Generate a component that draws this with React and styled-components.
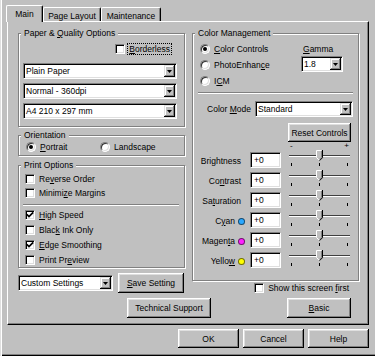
import React from "react";
import styled, { createGlobalStyle } from "styled-components";

const GlobalStyle = createGlobalStyle`
  * { box-sizing: border-box; }
  html, body { margin: 0; padding: 0; background: #c0c0c0; }
  body {
    font-family: "Liberation Sans", Arial, sans-serif;
    font-size: 8.5px;
    line-height: 10px;
    color: #000;
  }
`;

const Dialog = styled.div`
  width: 375px;
  height: 356px;
  padding: 5px 6px 0 6px;
  background: #c0c0c0;
  box-shadow: inset 1px 0 #dfdfdf, inset 2px 0 #fff, inset 0 -1px #000,
    inset 0 -2px #808080;
  display: flex;
  flex-direction: column;
  overflow: hidden;
`;

const TabStrip = styled.div`
  display: flex;
  align-items: flex-end;
  height: 17px;
  margin-bottom: -1px;
  position: relative;
  z-index: 1;
`;

const Tab = styled.div`
  width: ${(p) => p.$w}px;
  height: ${(p) => (p.$active ? 17 : 14)}px;
  margin-bottom: ${(p) => (p.$active ? 0 : 1)}px;
  background: #c0c0c0;
  border-top: 1px solid #fff;
  border-left: 1px solid #fff;
  border-right: 1px solid #000;
  box-shadow: inset -1px 0 #808080;
  border-radius: 2px 2px 0 0;
  display: flex;
  justify-content: center;
  padding-top: 3px;
  white-space: nowrap;
`;

const Panel = styled.div`
  position: relative;
  margin-left: 1px;
  width: 362px;
  height: 304px;
  border-top: 1px solid #fff;
  border-left: 1px solid #fff;
  border-right: 1px solid #000;
  border-bottom: 1px solid #000;
  box-shadow: inset -1px -1px #808080;
  padding: 11px 9px 0 10px;
  display: flex;
  flex-direction: column;
`;

const Columns = styled.div`
  display: grid;
  grid-template-columns: 167px 167px;
  column-gap: 7px;
  align-items: start;
`;

const Col = styled.div`
  display: flex;
  flex-direction: column;
`;

const Group = styled.div`
  position: relative;
  border: 1px solid #808080;
  box-shadow: inset 1px 1px #fff, 1px 1px #fff;
  padding: ${(p) => p.$pad};
  margin-top: ${(p) => p.$mt || 0}px;
`;

const Legend = styled.div`
  position: absolute;
  top: -6px;
  left: 2px;
  padding: 0 3px;
  line-height: 10px;
  background: #c0c0c0;
  white-space: nowrap;
`;

const Mn = styled.span`
  text-decoration: underline;
  text-underline-offset: 1px;
`;

const Text = styled.span`
  white-space: nowrap;
`;

const Option = styled.div`
  display: flex;
  align-items: center;
  gap: 4px;
  height: 10px;
  white-space: nowrap;
`;

const EndRow = styled.div`
  display: flex;
  justify-content: flex-end;
  padding-right: ${(p) => p.$pr || 0}px;
  margin-top: ${(p) => p.$mt || 0}px;
`;

const Focus = styled.span`
  outline: 1px dotted #000;
  outline-offset: 0;
  padding: 0 1px;
  margin-left: -1px;
`;

const CheckBox = styled.span`
  flex: none;
  width: 10px;
  height: 10px;
  background: #fff;
  border: 1px solid;
  border-color: #808080 #fff #fff #808080;
  box-shadow: inset 1px 1px #000, inset -1px -1px #dfdfdf;
  display: flex;
  align-items: center;
  justify-content: center;
`;

const RadioCircle = styled.span`
  flex: none;
  width: 10px;
  height: 10px;
  border-radius: 50%;
  background: #fff;
  border: 1px solid;
  border-color: #808080 #fff #fff #808080;
  box-shadow: inset 1px 1px #303030, inset -1px -1px #dfdfdf;
  display: flex;
  align-items: center;
  justify-content: center;
`;

const RadioDot = styled.span`
  width: 4px;
  height: 4px;
  border-radius: 50%;
  background: #000;
`;

const Stack = styled.div`
  display: flex;
  flex-direction: column;
  gap: ${(p) => p.$gap}px;
  margin-top: ${(p) => p.$mt || 0}px;
`;

const Field = styled.div`
  width: ${(p) => (p.$w ? `${p.$w}px` : "100%")};
  flex: none;
  height: 16px;
  background: #fff;
  border: 1px solid;
  border-color: #808080 #fff #fff #808080;
  box-shadow: inset 1px 1px #000, inset -1px -1px #dfdfdf;
  padding: 1px;
  display: flex;
  align-items: stretch;
`;

const FieldText = styled.span`
  flex: 1;
  padding-left: 1px;
  line-height: 12px;
  white-space: nowrap;
  overflow: hidden;
`;

const DropBtn = styled.span`
  flex: none;
  width: 11px;
  background: #c0c0c0;
  box-shadow: inset -1px -1px #000, inset 1px 1px #dfdfdf,
    inset -2px -2px #808080, inset 2px 2px #fff;
  display: flex;
  align-items: center;
  justify-content: center;
`;

const Separator = styled.div`
  height: 2px;
  border-top: 1px solid #808080;
  border-bottom: 1px solid #fff;
  margin: ${(p) => p.$m};
`;

const RadioPair = styled.div`
  display: grid;
  grid-template-columns: 74px auto;
`;

const Btn = styled.div`
  flex: none;
  width: ${(p) => p.$w}px;
  height: ${(p) => p.$h || 20}px;
  background: #c0c0c0;
  box-shadow: inset -1px -1px #000, inset 1px 1px #fff, inset -2px -2px #808080,
    inset 2px 2px #dfdfdf;
  display: flex;
  align-items: center;
  justify-content: center;
  white-space: nowrap;
  margin: ${(p) => p.$m || 0};
`;

const Row = styled.div`
  display: flex;
  align-items: center;
  gap: ${(p) => p.$gap || 0}px;
  height: ${(p) => p.$h}px;
  margin-top: ${(p) => p.$mt || 0}px;
  justify-content: ${(p) => p.$justify || "flex-start"};
`;

const TopSection = styled.div`
  display: flex;
  justify-content: space-between;
  align-items: flex-start;
`;

const GammaBlock = styled.div`
  width: 42px;
  margin-right: 10px;
  display: flex;
  flex-direction: column;
  gap: 2px;
`;

const GammaLabel = styled.div`
  height: 10px;
  padding-left: 2px;
`;

const ScaleRow = styled.div`
  display: flex;
  justify-content: space-between;
  height: 8px;
  margin: 0 3px 0 89px;
  padding: 0 1px;
  font-size: 8px;
  line-height: 7px;
`;

const SliderRow = styled.div`
  display: flex;
  align-items: flex-start;
  height: 20px;
`;

const LabelCell = styled.div`
  width: 45px;
  height: 20px;
  padding-top: 2px;
  padding-right: ${(p) => (p.$dot ? 0 : 4)}px;
  display: flex;
  justify-content: flex-end;
  align-items: center;
  gap: 3px;
  white-space: nowrap;
`;

const Dot = styled.span`
  width: 7px;
  height: 7px;
  border-radius: 50%;
  background: ${(p) => p.$c};
  border: 1px solid rgba(0, 0, 0, 0.55);
`;

const ValueBox = styled(Field)`
  margin: 2px 0 0 5px;
  padding-left: 2px;
`;

const SliderWrap = styled.div`
  margin-left: 8px;
  width: 61px;
  height: 18px;
`;

const BottomRow = styled.div`
  display: flex;
  justify-content: flex-end;
  gap: 76px;
  margin-top: 5px;
  padding-right: 8px;
`;

const Footer = styled.div`
  display: flex;
  justify-content: flex-end;
  gap: 4px;
  margin-top: 4px;
`;

const lbl = (t, i) =>
  i == null ? (
    <Text>{t}</Text>
  ) : (
    <Text>
      {t.slice(0, i)}
      <Mn>{t[i]}</Mn>
      {t.slice(i + 1)}
    </Text>
  );

const Check = ({ checked }) => (
  <CheckBox>
    {checked && (
      <svg width="8" height="8" viewBox="0 0 8 8">
        <path d="M0.8 3.4 L3 5.6 L7.2 1.4" fill="none" stroke="#000" strokeWidth="1.7" />
      </svg>
    )}
  </CheckBox>
);

const Radio = ({ checked }) => (
  <RadioCircle>{checked && <RadioDot />}</RadioCircle>
);

const Select = ({ w, children }) => (
  <Field $w={w}>
    <FieldText>{children}</FieldText>
    <DropBtn>
      <svg width="5" height="3" viewBox="0 0 5 3">
        <polygon points="0,0 5,0 2.5,3" fill="#000" />
      </svg>
    </DropBtn>
  </Field>
);

const Slider = () => (
  <SliderWrap>
    <svg width="61" height="18" viewBox="0 0 61 18">
      <rect x="0" y="5" width="61" height="1" fill="#404040" />
      <rect x="0" y="6" width="61" height="1" fill="#fff" />
      <rect x="2" y="13" width="1" height="3" fill="#000" />
      <rect x="30" y="13" width="1" height="3" fill="#000" />
      <rect x="58" y="13" width="1" height="3" fill="#000" />
      <polygon points="27,0 33,0 33,7.5 30,10.5 27,7.5" fill="#c0c0c0" />
      <path d="M27.5 7.5 V0.5 H32.5" fill="none" stroke="#fff" strokeWidth="1" />
      <path d="M27.5 7.5 L30.5 10.5" fill="none" stroke="#fff" strokeWidth="1" />
      <path d="M33.5 0 V7.7 L30.5 10.7" fill="none" stroke="#000" strokeWidth="1" />
      <path d="M32.5 1 V7.3 L30.5 9.3" fill="none" stroke="#808080" strokeWidth="1" />
    </svg>
  </SliderWrap>
);

const printA = [
  ["Reverse Order", 2, false],
  ["Minimize Margins", 6, false],
];
const printB = [
  ["High Speed", 0, true],
  ["Black Ink Only", 4, false],
  ["Edge Smoothing", 0, true],
  ["Print Preview", 8, false],
];

const sliders = [
  ["Brightness", null, null],
  ["Contrast", 2, null],
  ["Saturation", 2, null],
  ["Cyan", 1, "#2aa8ff"],
  ["Magenta", 5, "#ff22ff"],
  ["Yellow", 5, "#ffff00"],
];

export default function App() {
  return (
    <>
      <GlobalStyle />
      <Dialog>
        <TabStrip>
          <Tab $active $w={37}>Main</Tab>
          <Tab $w={58}>Page Layout</Tab>
          <Tab $w={60}>Maintenance</Tab>
        </TabStrip>
        <Panel>
          <Columns>
            <Col>
              <Group $pad="10px 7px 7px 4px">
                <Legend>{lbl("Paper & Quality Options", 8)}</Legend>
                <EndRow $pr={6}>
                  <Option>
                    <Check />
                    <Focus>{lbl("Borderless", 0)}</Focus>
                  </Option>
                </EndRow>
                <Stack $gap={4} $mt={9}>
                  <Select>Plain Paper</Select>
                  <Select>Normal - 360dpi</Select>
                  <Select>A4 210 x 297 mm</Select>
                </Stack>
              </Group>

              <Group $mt={8} $pad="6px 0 3px 7px">
                <Legend>Orientation</Legend>
                <RadioPair>
                  <Option>
                    <Radio checked />
                    {lbl("Portrait", 0)}
                  </Option>
                  <Option>
                    <Radio />
                    {lbl("Landscape")}
                  </Option>
                </RadioPair>
              </Group>

              <Group $mt={9} $pad="8px 5px 2px 6px">
                <Legend>Print Options</Legend>
                <Stack $gap={4}>
                  {printA.map(([t, i, c]) => (
                    <Option key={t}>
                      <Check checked={c} />
                      {lbl(t, i)}
                    </Option>
                  ))}
                </Stack>
                <Separator $m="6px 0 4px -2px" />
                <Stack $gap={5}>
                  {printB.map(([t, i, c]) => (
                    <Option key={t}>
                      <Check checked={c} />
                      {lbl(t, i)}
                    </Option>
                  ))}
                </Stack>
              </Group>

              <Row $h={20} $gap={5} $mt={5}>
                <Select w={95}>Custom Settings</Select>
                <Btn $w={66}>{lbl("Save Setting", 0)}</Btn>
              </Row>
            </Col>

            <Col>
              <Group $pad="10px 5px 10px 7px">
                <Legend>Color Management</Legend>
                <TopSection>
                  <Stack $gap={6}>
                    <Option>
                      <Radio checked />
                      {lbl("Color Controls", 0)}
                    </Option>
                    <Option>
                      <Radio />
                      {lbl("PhotoEnhance", 10)}
                    </Option>
                    <Option>
                      <Radio />
                      {lbl("ICM", 1)}
                    </Option>
                  </Stack>
                  <GammaBlock>
                    <GammaLabel>{lbl("Gamma", 0)}</GammaLabel>
                    <Select w={42}>1.8</Select>
                  </GammaBlock>
                </TopSection>
                <Separator $m="6px 0 0 -2px" />
                <Row $h={16} $gap={4} $mt={7} $justify="flex-end">
                  {lbl("Color Mode", 6)}
                  <Select w={98}>Standard</Select>
                </Row>
                <EndRow $mt={6}>
                  <Btn $w={63} $h={19} $m="0 2px 0 0">Reset Controls</Btn>
                </EndRow>
                <ScaleRow>
                  <span>-</span>
                  <span>+</span>
                </ScaleRow>
                {sliders.map(([t, i, c]) => (
                  <SliderRow key={t}>
                    <LabelCell $dot={!!c}>
                      {lbl(t, i)}
                      {c && <Dot $c={c} />}
                    </LabelCell>
                    <ValueBox $w={31}>
                      <FieldText>+0</FieldText>
                    </ValueBox>
                    <Slider />
                  </SliderRow>
                ))}
              </Group>
              <EndRow $pr={10} $mt={2}>
                <Option>
                  <Check />
                  {lbl("Show this screen first", 17)}
                </Option>
              </EndRow>
            </Col>
          </Columns>
          <BottomRow>
            <Btn $w={84}>Technical Support</Btn>
            <Btn $w={64}>{lbl("Basic", 0)}</Btn>
          </BottomRow>
        </Panel>
        <Footer>
          <Btn $w={61} $h={19}>OK</Btn>
          <Btn $w={61} $h={19}>Cancel</Btn>
          <Btn $w={61} $h={19}>Help</Btn>
        </Footer>
      </Dialog>
    </>
  );
}
